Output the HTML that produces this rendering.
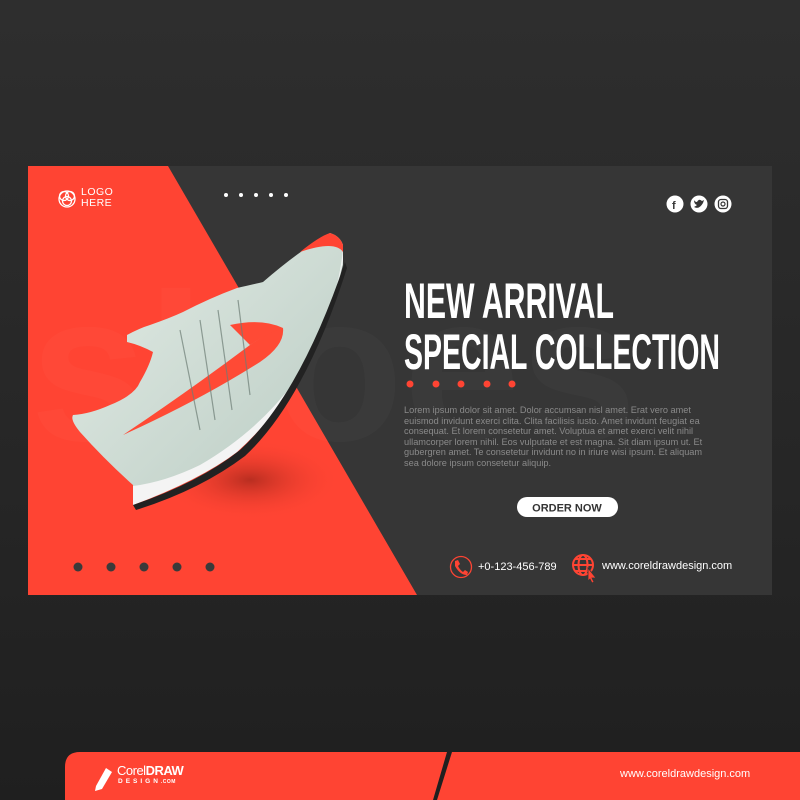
<!DOCTYPE html>
<html><head><meta charset="utf-8"><style>
*{margin:0;padding:0;box-sizing:border-box}
body{width:800px;height:800px;overflow:hidden;background:linear-gradient(180deg,#2e2e2e 0%,#262626 60%,#1f1f1f 100%);font-family:"Liberation Sans",sans-serif;position:relative}
.abs{position:absolute}
</style></head><body>
<svg class="abs" style="left:0;top:0" width="800" height="800" viewBox="0 0 800 800">
<defs>
<radialGradient id="sh" cx="0.5" cy="0.5" r="0.5"><stop offset="0" stop-color="#8a1f14" stop-opacity=".6"/><stop offset="1" stop-color="#ff4433" stop-opacity="0"/></radialGradient>
<linearGradient id="up" x1="0" y1="0" x2="1" y2="1"><stop offset="0" stop-color="#e3ece6"/><stop offset="1" stop-color="#b9cbc2"/></linearGradient>
</defs>
<rect x="28" y="166" width="744" height="429" fill="#363636"/>
<polygon points="28,166 168,166 417,595 28,595" fill="#ff4433"/>
<text x="30" y="440" font-family="Liberation Sans" font-weight="bold" font-size="210" fill="#fff" opacity="0.018">shoes</text>
<ellipse cx="250" cy="480" rx="90" ry="40" fill="url(#sh)"/>
<!-- shoe -->
<path d="M330,233 Q340,236 343,245 L343,265 Q330,320 297,378 Q270,420 237,452 Q200,480 133,505 L133,485 Q105,460 80,432 Q70,420 73,415 Q90,414 110,405 Q135,395 140,382 Q150,365 153,352 Q140,345 127,342 L127,335 Q140,328 150,325 Q170,318 183,312 Q210,298 237,288 Q255,284 263,282 Q300,250 330,233Z" fill="url(#up)"/>
<path d="M343,250 Q335,320 297,378 Q260,430 200,465 Q165,482 133,486 L133,505 Q200,480 237,452 Q290,405 320,330 Q338,290 343,260Z" fill="#f4f4f4"/>
<path d="M133,505 Q200,482 240,450 Q300,395 345,262 L347,268 Q305,400 245,456 Q200,490 136,510Z" fill="#222"/>
<path d="M330,233 Q340,236 343,245 L343,252 Q335,240 300,252 Q320,236 330,233Z" fill="#ff4433"/>
<path d="M123,435 Q190,390 250,345 Q275,328 283,328 Q285,345 260,362 Q200,400 123,435Z" fill="#ff4a35"/>
<path d="M230,325 Q262,318 283,328 Q270,332 250,345Z" fill="#ff4a35"/>
<g stroke="#6d7d75" stroke-width="1.2" fill="none" opacity=".7"><path d="M180,330 L200,430"/><path d="M200,320 L215,420"/><path d="M218,310 L232,410"/><path d="M238,300 L250,395"/></g>
<!-- bottom bar -->
<path d="M80,752 L447,752 L433,800 L65,800 L65,767 Q65,752 80,752Z" fill="#ff4433"/>
<polygon points="452,752 800,752 800,800 437,800" fill="#ff4433"/>
<!-- logo icon -->
<g stroke="#fff" stroke-width="1.3" fill="none"><circle cx="67" cy="199" r="8"/><circle cx="64" cy="196" r="4.5"/><circle cx="70" cy="196" r="4.5"/><circle cx="67" cy="201" r="4.5"/></g>
<g fill="#fff"><circle cx="226" cy="195" r="2"/><circle cx="241" cy="195" r="2"/><circle cx="256" cy="195" r="2"/><circle cx="271" cy="195" r="2"/><circle cx="286" cy="195" r="2"/></g>
<g fill="#3a3a3a"><circle cx="78" cy="567" r="4.5"/><circle cx="111" cy="567" r="4.5"/><circle cx="144" cy="567" r="4.5"/><circle cx="177" cy="567" r="4.5"/><circle cx="210" cy="567" r="4.5"/></g>
<g fill="#ff4433"><circle cx="410" cy="384" r="3.5"/><circle cx="436" cy="384" r="3.5"/><circle cx="461" cy="384" r="3.5"/><circle cx="487" cy="384" r="3.5"/><circle cx="512" cy="384" r="3.5"/></g>
<text x="404" y="318" font-family="Liberation Sans Narrow,Liberation Sans" font-weight="bold" font-size="50" fill="#fff" textLength="210" lengthAdjust="spacingAndGlyphs">NEW ARRIVAL</text>
<text x="404" y="369" font-family="Liberation Sans Narrow,Liberation Sans" font-weight="bold" font-size="50" fill="#fff" textLength="316" lengthAdjust="spacingAndGlyphs">SPECIAL COLLECTION</text>
<!-- social -->
<g fill="#fff"><circle cx="675" cy="204" r="8.5"/><circle cx="699" cy="204" r="8.5"/><circle cx="723" cy="204" r="8.5"/></g>
<text x="672" y="209" font-size="11" font-weight="bold" fill="#363636">f</text>
<path d="M694,207 Q699,210 703,203 L704,200 L702,201 Q699,198 697,202 Q695,202 694,200 Q694,204 697,205 Q696,206 694,207Z" fill="#363636"/>
<rect x="718.5" y="199.5" width="9" height="9" rx="2.5" fill="none" stroke="#363636" stroke-width="1.3"/><circle cx="723" cy="204" r="2" fill="none" stroke="#363636" stroke-width="1.2"/>
<rect x="517" y="497" width="101" height="20" rx="10" fill="#fff"/>
<text x="567" y="511.5" text-anchor="middle" font-size="11" font-weight="bold" fill="#333">ORDER NOW</text>
<!-- phone icon -->
<circle cx="461" cy="567" r="10.5" fill="none" stroke="#ff4433" stroke-width="1.3"/>
<path d="M455,561 L458,560 L460,564 L458,566 Q460,570 463,572 L465,570 L468,572 L467,575 Q460,575 455,566Z" fill="#ff4433"/>
<!-- globe -->
<g stroke="#ff4433" stroke-width="2" fill="none"><circle cx="583" cy="565" r="10"/><ellipse cx="583" cy="565" rx="4.5" ry="10"/><line x1="573" y1="565" x2="593" y2="565"/><line x1="575" y1="559" x2="591" y2="559"/><line x1="575" y1="571" x2="591" y2="571"/></g>
<path d="M588,568 L596,578 L592,578 L594,582 L592,583 L590,579 L588,581Z" fill="#ff4433" stroke="#363636" stroke-width=".8"/>
<!-- corel logo -->
<path d="M96,786 L106,768 L112,772 L102,789 L95,791Z" fill="#fff"/>
</svg>
<div class="abs" style="left:81px;top:187px;color:#fff;font-size:10.5px;line-height:11px;letter-spacing:.5px">LOGO<br>HERE</div>
<div class="abs" style="left:404px;top:405px;width:312px;color:#8a8a8a;font-size:9.2px;line-height:10.5px">Lorem ipsum dolor sit amet. Dolor accumsan nisl amet. Erat vero amet euismod invidunt exerci clita. Clita facilisis iusto. Amet invidunt feugiat ea consequat. Et lorem consetetur amet. Voluptua et amet exerci velit nihil ullamcorper lorem nihil. Eos vulputate et est magna. Sit diam ipsum ut. Et gubergren amet. Te consetetur invidunt no in iriure wisi ipsum. Et aliquam sea dolore ipsum consetetur aliquip.</div>
<div class="abs" style="left:478px;top:561px;color:#fff;font-size:11px">+0-123-456-789</div>
<div class="abs" style="left:602px;top:560px;color:#fff;font-size:11px">www.coreldrawdesign.com</div>
<div class="abs" style="left:117px;top:764px;color:#fff;font-size:13px;line-height:13px;letter-spacing:-.5px">Corel<b>DRAW</b></div>
<div class="abs" style="left:118px;top:778px;color:#fff;font-size:6.5px;letter-spacing:3px;font-weight:bold">DESIGN<span style="font-size:5px;letter-spacing:.5px">.COM</span></div>
<div class="abs" style="left:620px;top:768px;color:#fff;font-size:11px">www.coreldrawdesign.com</div>
</body></html>
